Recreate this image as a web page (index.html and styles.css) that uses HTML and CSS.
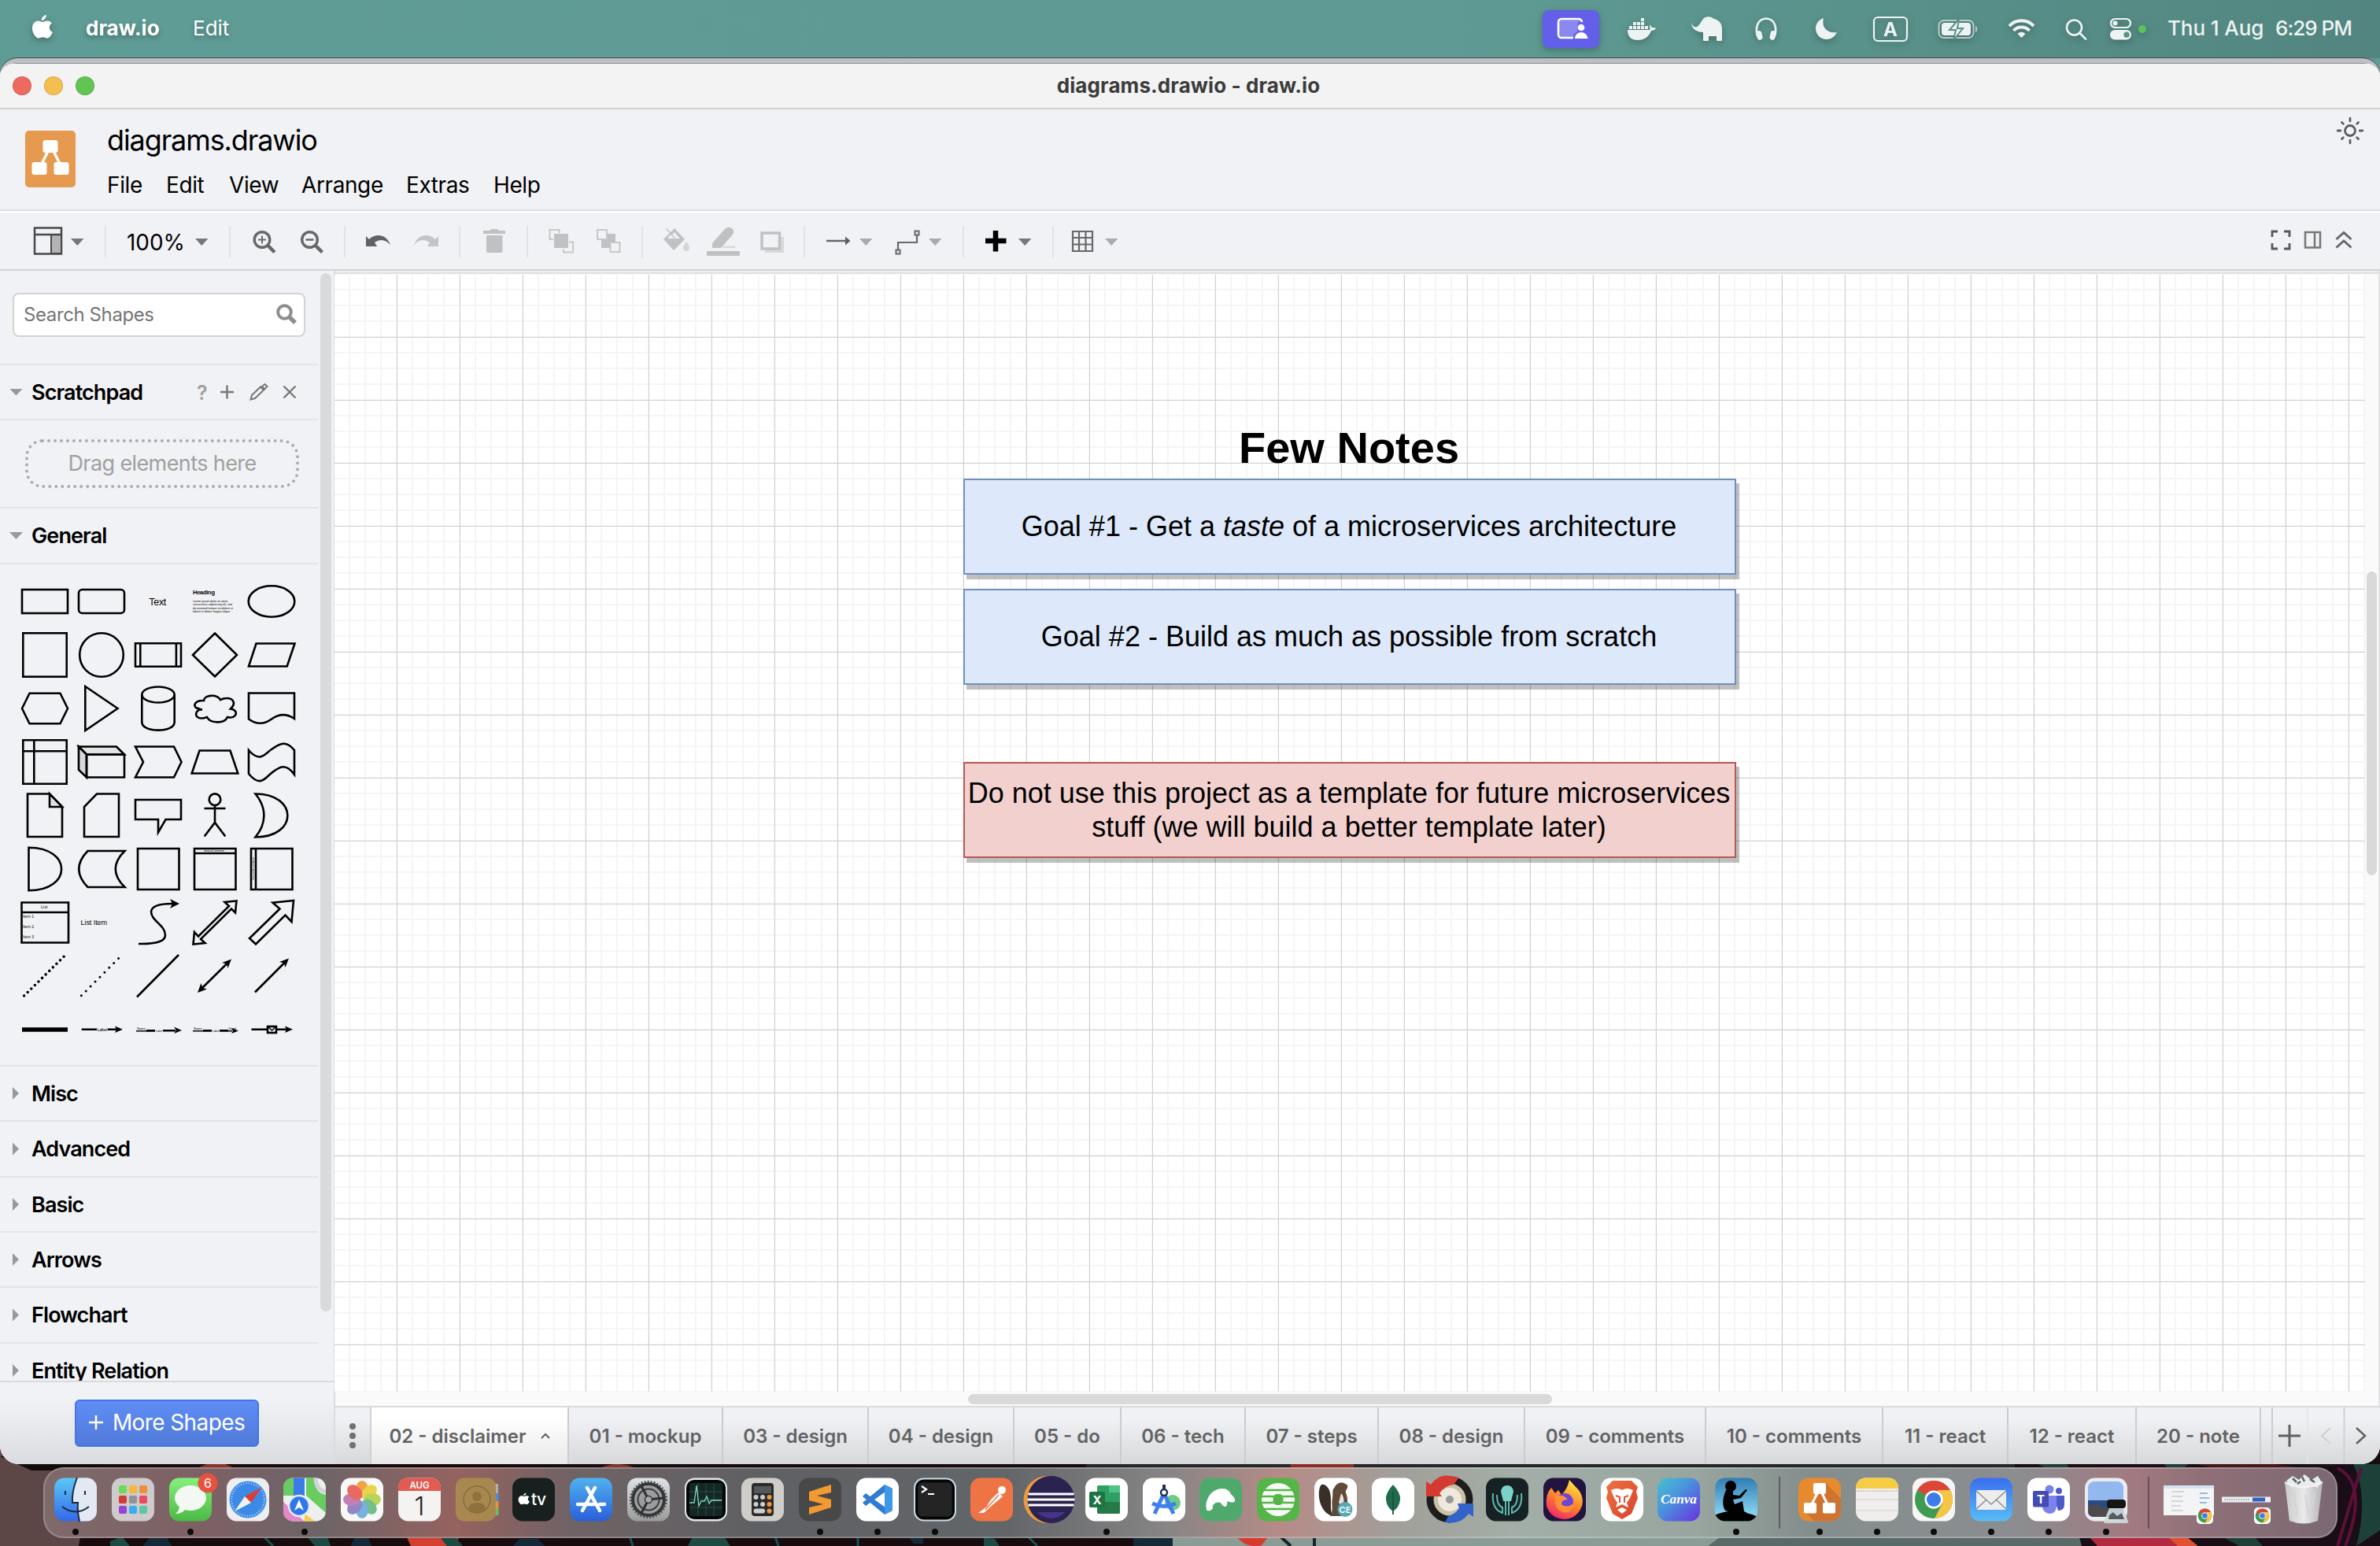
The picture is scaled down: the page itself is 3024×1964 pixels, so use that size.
FILE: index.html
```html
<!DOCTYPE html>
<html lang="en">
<head>
<meta charset="utf-8">
<title>diagrams.drawio - draw.io</title>
<link rel="stylesheet" href="styles.css">
</head>
<body>
<svg width="0" height="0" class="defs">
  <defs>
    <linearGradient id="gBlue" x1="0" y1="0" x2="0" y2="1"><stop offset="0" stop-color="#5ac8f5"/><stop offset="1" stop-color="#3568e8"/></linearGradient>
    <linearGradient id="gStore" x1="0" y1="0" x2="0" y2="1"><stop offset="0" stop-color="#4fb2ee"/><stop offset="1" stop-color="#2a5fd8"/></linearGradient>
    <linearGradient id="gMail" x1="0" y1="0" x2="0" y2="1"><stop offset="0" stop-color="#3a6df0"/><stop offset="1" stop-color="#58bdf5"/></linearGradient>
    <linearGradient id="gGreen" x1="0" y1="0" x2="0" y2="1"><stop offset="0" stop-color="#86f07c"/><stop offset="1" stop-color="#4cb944"/></linearGradient>
    <linearGradient id="gCanva" x1="0" y1="0" x2="1" y2="1"><stop offset="0" stop-color="#47c3cf"/><stop offset=".45" stop-color="#4a90dc"/><stop offset="1" stop-color="#6b30e0"/></linearGradient>
    <linearGradient id="gGrey" x1="0" y1="0" x2="0" y2="1"><stop offset="0" stop-color="#dfe3e6"/><stop offset="1" stop-color="#9a9a9a"/></linearGradient>
    <linearGradient id="gFox" x1=".8" y1="0" x2=".3" y2="1"><stop offset="0" stop-color="#fff04a"/><stop offset=".5" stop-color="#ff8a2a"/><stop offset="1" stop-color="#f0286a"/></linearGradient>
    <linearGradient id="gKindle" x1="0" y1="0" x2="0" y2="1"><stop offset="0" stop-color="#2f7db4"/><stop offset="1" stop-color="#9be4fb"/></linearGradient>
    <linearGradient id="gBrave" x1="0" y1="0" x2="1" y2="1"><stop offset="0" stop-color="#ee7340"/><stop offset="1" stop-color="#d8402c"/></linearGradient>
    <linearGradient id="gBin" x1="0" y1="0" x2="1" y2="0"><stop offset="0" stop-color="#c9cacb"/><stop offset=".5" stop-color="#e9e9ea"/><stop offset="1" stop-color="#b4b4b6"/></linearGradient>
    <clipPath id="tileClip"><rect x="-27" y="-27.500" width="54" height="55" rx="12.500"/></clipPath>
    <rect id="tile" x="-27" y="-27.500" width="54" height="55" rx="12.500"/>
    <circle id="run" cx="0" cy="41" r="4" fill="#0c0c0c"/>
    <path id="caret" d="M0 0H16.500L8.250 9Z"/>
    <g id="chrome">
      <circle r="24" fill="#3f9b52"/>
      <path d="M0 0L-20.800-12A24 24 0 0 1 20.800-12Z" fill="#dc4637"/>
      <path d="M0 0L-22-9.500L-10.500 8L0 12Z" fill="#3f9b52"/>
      <path d="M5-12H20.800A24 24 0 0 1 1 24L11 5Z" fill="#f6c544"/>
      <circle r="11.500" fill="#fff"/><circle r="9" fill="#3d7be8"/>
    </g>
  </defs>
</svg>

<div class="desktop">
  <header class="menubar">
    <svg class="apple" width="28" height="34" viewBox="0 0 28 34"><path fill="#fff" d="M18.800 1c.2 3.500-2.600 7-6 7.100C12.400 4.900 15.500 1.500 18.800 1zM14 10c1.500 0 3.400-1.700 6.300-1.500 2.200.1 4.200 1.100 5.500 3-4.500 2.900-3.900 9.200 1 11.200-1.100 3-3.700 7.800-6.800 7.800-2.200 0-3-1.300-5.600-1.300s-3.500 1.300-5.500 1.300C5.400 30.500 1 23.800 1 18c0-6 3.700-9.400 7.300-9.400C11 8.600 12.800 10 14 10z"/></svg>
    <span class="app-name">draw.io</span>
    <span class="app-menu">Edit</span>
    <div class="status">
      <svg width="100" height="74" viewBox="1950 0 100 74"><rect x="1960" y="13" width="72" height="48" rx="8" fill="#625fe8"/><rect x="1980" y="24" width="30" height="24" rx="4" fill="#8b88f0" stroke="#fff" stroke-width="2.600"/><path d="M1999 50v-6l5-4 1-12h10v22z" fill="#625fe8"/><circle cx="2009" cy="35" r="4.300" fill="#fff"/><path d="M2001 49c0-5 4-8 8-8s8 3 8.500 8z" fill="#fff"/></svg>
      <svg width="76" height="74" viewBox="2050 0 76 74" fill="#edf3f2"><path d="M2068 38h28c1-1 0-4 0-7l3 4c2 0 4 0 5 1-1 2-4 3-6 3-3 8-9 12-17 12-8 0-13-4-13-13z"/><path d="M2070 33h4v4h-4zM2075 33h4v4h-4zM2080 33h4v4h-4zM2085 33h4v4h-4zM2090 33h4v4h-4zM2075 28h4v4h-4zM2080 28h4v4h-4zM2085 28h4v4h-4zM2085 23h4v4h-4z"/></svg>
      <svg width="83" height="74" viewBox="2126 0 83 74" fill="#edf3f2"><path d="M2149 29c1 4 4 6 7 5 4-2 5-7 9-11 4-3 10-2 13 1 7 2 10 6 10 13v13c0 2-1 2-2 2h-3c-2 0-2 0-2-2v-4h-10v4c0 2 0 2-2 2h-3c-2 0-2 0-2-2v-9c-8 0-14-4-15-11z"/></svg>
      <svg width="71" height="74" viewBox="2209 0 71 74"><path d="M2233 46c-3-11 0-22 11-22.500 11 .5 14 11.500 11 22.500" fill="none" stroke="#edf3f2" stroke-width="2.600"/><rect x="2232" y="39" width="7" height="12" rx="3.500" fill="#edf3f2" transform="rotate(-12 2235 45)"/><rect x="2249" y="39" width="7" height="12" rx="3.500" fill="#edf3f2" transform="rotate(12 2253 45)"/></svg>
      <svg width="70" height="74" viewBox="2280 0 70 74"><path d="M2317 23c-3 11 4 20 17 18-3 6-8 9-13 9-8 0-14-6-14-14 0-6 4-11 10-13z" fill="#edf3f2"/></svg>
      <svg width="90" height="74" viewBox="2350 0 90 74"><rect x="2381" y="22" width="42" height="30" rx="5" fill="none" stroke="#edf3f2" stroke-width="2.200"/><text x="2402" y="45.500" text-anchor="middle" class="lang">A</text></svg>
      <svg width="90" height="74" viewBox="2440 0 90 74"><rect x="2463.500" y="26" width="44" height="22" rx="6.500" fill="none" stroke="#b4cdca" stroke-width="2"/><rect x="2467" y="29" width="37" height="16" rx="4" fill="#edf3f2"/><path d="M2510 33v8c3-1 3-7 0-8z" fill="#b4cdca"/><path d="M2489 24l-12 14h8l-3 13 12-15h-7z" fill="#edf3f2" stroke="#588f89" stroke-width="2"/></svg>
      <svg width="75" height="74" viewBox="2530 0 75 74" fill="none" stroke="#edf3f2" stroke-width="4"><path d="M2553 33c8-9 23-9 31 0M2558.500 39c5-6 15-6 20 0"/><path d="M2568.500 48l-5-5c3-3 7-3 10 0z" fill="#edf3f2" stroke="none"/></svg>
      <svg width="61" height="74" viewBox="2605 0 61 74" fill="none" stroke="#edf3f2" stroke-width="2.600" stroke-linecap="round"><circle cx="2635.500" cy="35" r="9.500"/><path d="M2642.500 42l7.500 7.500"/></svg>
      <svg width="74" height="74" viewBox="2666 0 74 74"><rect x="2682" y="24" width="25" height="11" rx="5.500" fill="none" stroke="#edf3f2" stroke-width="2.200"/><circle cx="2687.500" cy="29.500" r="3" fill="#edf3f2"/><rect x="2681" y="38" width="27" height="12.500" rx="6.200" fill="#edf3f2"/><circle cx="2702" cy="44.200" r="3.600" fill="#56908a"/><circle cx="2722" cy="37" r="5" fill="#5fc15d"/></svg>
    </div>
    <span class="date">Thu 1 Aug</span>
    <span class="clock">6:29 PM</span>
  </header>

  <main class="window">
    <div class="titlebar">
      <div class="lights"><i class="red"></i><i class="yellow"></i><i class="green"></i></div>
      <div class="title">diagrams.drawio - draw.io</div>
    </div>

    <div class="header">
      <svg class="logo" width="64" height="72" viewBox="0 0 64 72"><rect width="64" height="72" rx="5" fill="#e59a50"/><path d="M30 24L20 44M35 24L45 44" stroke="#fff" stroke-width="3.500"/><g fill="#fff"><rect x="22.500" y="12" width="19" height="16" rx="3"/><rect x="8.500" y="40" width="19" height="16" rx="3"/><rect x="36.500" y="40" width="19" height="16" rx="3"/></g></svg>
      <div class="doc">
        <div class="doc-name">diagrams.drawio</div>
        <nav class="menus"><span class="m-file">File</span><span class="m-edit">Edit</span><span class="m-view">View</span><span class="m-arr">Arrange</span><span class="m-ext">Extras</span><span>Help</span></nav>
      </div>
      <svg class="sun" width="36" height="36" viewBox="-18 -18 36 36" fill="none" stroke="#5a5c5e" stroke-width="2.800" stroke-linecap="round"><circle r="6.500"/><path d="M0-15.800v3.600M0 12.200v3.600M-15.800 0h3.600M12.200 0h3.600M-10.500-10.500l1.800 1.800M10.500 10.500l-1.800-1.800M-10.500 10.500l1.800-1.800M10.500-10.500l-1.800 1.800"/></svg>
    </div>

    <div class="toolbar">
      <svg width="133" height="72" viewBox="0 270 133 72"><rect x="44" y="288.500" width="34" height="33" fill="none" stroke="#47494b" stroke-width="2.500"/><rect x="65" y="297" width="13" height="24" fill="#b4b2b3" stroke="#47494b" stroke-width="2"/><path d="M44 297H78" stroke="#47494b" stroke-width="2.500"/><use href="#caret" x="90" y="302" fill="#777"/></svg>
      <svg class="group" width="158" height="72" viewBox="133 270 158 72"><text x="161" y="316.500" textLength="74" lengthAdjust="spacingAndGlyphs" class="zoom">100%</text><use href="#caret" x="248" y="302" fill="#777"/></svg>
      <svg class="group" width="146" height="72" viewBox="291 270 146 72" fill="none" stroke="#66686a"><circle cx="333" cy="303.500" r="9.800" stroke-width="3.400"/><path d="M328 303.500h10M333 298.500v10" stroke-width="2"/><path d="M340 310.500l9 9" stroke-width="4.500"/><circle cx="393.500" cy="303.500" r="9.800" stroke-width="3.400"/><path d="M388.500 303.500h10" stroke-width="2.500"/><path d="M400.500 310.500l9 9" stroke-width="4.500"/></svg>
      <svg class="group" width="146" height="72" viewBox="437 270 146 72"><path d="M465 299l4 4c8-8 22-7 27 7-6-7-13-8-20-3l3 5h-14z" fill="#606264"/><path d="M557 299l-4 4c-8-8-22-7-27 7 6-7 13-8 20-3l-3 5h14z" fill="#c3c5c7"/></svg>
      <svg class="group" width="86" height="72" viewBox="583 270 86 72" fill="#c0c1c3"><path d="M614 292h8l2-2h8l2 2h8v4h-28zM618 298h20.500v20c0 1-1 2-2 2h-16.500c-1 0-2-1-2-2z"/></svg>
      <svg class="group" width="146" height="72" viewBox="669 270 146 72" stroke="#c5c7c9" stroke-width="2"><rect x="704" y="296" width="18" height="18" fill="#bfc1c3" stroke="none"/><path d="M703 303h-4.500v-12h12v4M716 315.500v4h12v-13h-5" fill="none"/><path d="M764 296h18v18h-18z" fill="#bfc1c3" stroke="none"/><rect x="759" y="291" width="12" height="12" fill="#f1f2f5"/><rect x="775.500" y="307" width="12" height="12" fill="#f1f2f5"/></svg>
      <svg class="group" width="206" height="72" viewBox="815 270 206 72" fill="#c0c1c3"><path d="M847 289l5 5 5-5 13 14-14 14-13-14 8-8-5-5zM852 297l-4 5h16l-7-8-3 3 4 4-1 1z" fill-rule="evenodd"/><path d="M872 306c3 4 4 6 4 8a4 4 0 0 1-8 0c0-2 1-4 4-8z" fill="#d4d5d7"/><path d="M905 314v-6l15-17c3-4 8-4 11-1 2 3 1 5 0 7l-15 17z"/><path d="M918 311.500h16v2.500h-16z" fill="#d8d9db"/><rect x="898" y="318" width="42" height="6"/><rect x="972" y="300" width="24" height="20" fill="#d8d9db"/><rect x="968" y="295" width="22.500" height="20" fill="#f1f2f5" stroke="#c0c1c3" stroke-width="3.500"/></svg>
      <svg class="group" width="202" height="72" viewBox="1021 270 202 72"><path d="M1050 305h27" stroke="#66686a" stroke-width="2.500"/><path d="M1074 299.500l6.500 5.500-6.500 5.500z" fill="#5c5e60"/><use href="#caret" x="1092" y="302" fill="#aaa"/><path d="M1141 317v-10h24v-10" fill="none" stroke="#66686a" stroke-width="2.200"/><rect x="1138.500" y="316.500" width="5" height="5" fill="#f1f2f5" stroke="#66686a" stroke-width="2"/><rect x="1162.500" y="292.500" width="5" height="5" fill="#f1f2f5" stroke="#66686a" stroke-width="2"/><use href="#caret" x="1180" y="302" fill="#aaa"/></svg>
      <svg class="group" width="114" height="72" viewBox="1223 270 114 72"><path d="M1252 305h26.500M1265 292v26.500" stroke="#000" stroke-width="6.500"/><use href="#caret" x="1294" y="302" fill="#777"/></svg>
      <svg class="group" width="114" height="72" viewBox="1337 270 114 72"><path d="M1363 293h25v25h-25zM1371 293v25M1379.500 293v25M1363 301h25M1363 309.500h25" fill="none" stroke="#66686a" stroke-width="2.200"/><use href="#caret" x="1404" y="302" fill="#aaa"/></svg>
      <svg class="tools-right" width="164" height="72" viewBox="2860 270 164 72" fill="none" stroke="#66686a" stroke-width="2.500"><path d="M2887 300v-7h7M2902 293h7v7M2909 308v7h-7M2894 315h-7v-7" stroke="#55575a" stroke-width="2.800"/><rect x="2929" y="294" width="19" height="19.500" stroke="#777"/><path d="M2941 294v19.500" stroke="#777"/><path d="M2968.500 303l9.500-8.500 9.500 8.500M2968.500 313.500l9.500-8.500 9.500 8.500" stroke-width="3"/></svg>
    </div>

    <div class="body">
      <aside class="sidebar">
        <div class="scroll">
          <div class="sections">
            <div class="search-row"><div class="search"><span>Search Shapes</span><svg width="26" height="26" viewBox="0 0 26 26" fill="none" stroke="#8d8d8d"><circle cx="10.500" cy="10.500" r="8.300" stroke-width="4"/><path d="M16.500 16.500l7.500 7.500" stroke-width="5.500"/></svg></div></div>
            <div class="section"><i class="open"></i><span>Scratchpad</span>
              <svg class="pad-tools" width="130" height="26" viewBox="249 485 130 26" fill="none" stroke="#777" stroke-width="2.400"><text x="250" y="507.500" class="help">?</text><path d="M280 498h17M288.500 489.500v17M360.500 490.500l15 15M375.500 490.500l-15 15"/><path d="M318.500 507.500l1.500-5.500 11-10.500 4 4-11 10.500zM333 491l3.500-3 3 3-3.500 3.500z" stroke-width="2"/></svg>
            </div>
            <div class="drop-row"><div class="drop">Drag elements here</div></div>
            <div class="section tall"><i class="open"></i><span>General</span></div>
            <div class="palette">
              <svg viewBox="-36 -34 72 68"><rect x="-29" y="-15" width="58" height="30"/></svg>
              <svg viewBox="-36 -34 72 68"><rect x="-29" y="-15" width="58" height="30" rx="4.500"/></svg>
              <svg viewBox="-36 -34 72 68"><text x="-11.700" y="4.500" font-size="12.500" textLength="22">Text</text></svg>
              <svg viewBox="-36 -34 72 68"><text x="-28" y="-9" font-size="7.500" font-weight="bold" textLength="28">Heading</text><g font-size="3.600"><text x="-28" y="1" textLength="45">Lorem ipsum dolor sit amet,</text><text x="-28" y="5.300" textLength="50">consectetur adipisicing elit, sed</text><text x="-28" y="9.800" textLength="51">do eiusmod tempor incididunt ut</text><text x="-28" y="14" textLength="48">labore et dolore magna aliqua.</text></g></svg>
              <svg viewBox="-36 -34 72 68"><ellipse rx="29.300" ry="19.700"/></svg>

              <svg viewBox="-36 -34 72 68"><rect x="-27.700" y="-27.700" width="55.400" height="55.400"/></svg>
              <svg viewBox="-36 -34 72 68"><circle r="27.800"/></svg>
              <svg viewBox="-36 -34 72 68"><path d="M-29-14.700H29V14.700H-29zM-22.700-14.700V14.700M22.900-14.700V14.700"/></svg>
              <svg viewBox="-36 -34 72 68"><path d="M0-27.500L28 0 0 27.500-28 0z"/></svg>
              <svg viewBox="-36 -34 72 68"><path d="M-19.500-14.500H29.500L19.700 14.500H-29z"/></svg>

              <svg viewBox="-36 -34 72 68"><path d="M-29 0L-19.500-19.300H19.500L29 0 19.500 19.300H-19.500z"/></svg>
              <svg viewBox="-36 -34 72 68"><path d="M-20.700-28L20.500 0-20.700 28z"/></svg>
              <svg viewBox="-36 -34 72 68"><ellipse cy="-17.500" rx="20.700" ry="10"/><path d="M-20.700-17.500V17.500C-20.700 31 20.700 31 20.700 17.500V-17.500"/></svg>
              <svg viewBox="-36 -34 72 68"><path d="M-14-10C-24-10.500-28-5-24-1-20 1-20 1-16 1.500-25 1-25 9-22 11-18 14-13 12-10 11-6 19 12 20 16 11 28 14 31 2 20 .5 27-6 24-13 15-13 12-13 9-12 7-11 2-19-14-17-14-10z"/></svg>
              <svg viewBox="-36 -34 72 68"><path d="M-29-19.500H29V13Q14.500 3 0 13.500T-29 13.500z"/></svg>

              <svg viewBox="-36 -34 72 68"><path d="M-27.700-27.700H27.700V27.700H-27.700zM-13.700-27.700V27.700M-27.700-13.700H27.700"/></svg>
              <svg viewBox="-36 -34 72 68"><path fill="#e2e3e5" d="M-29-19.500H19L29-9.500H-19z"/><path fill="#d8d9dc" d="M-29-19.500L-19-9.500V19.500L-29 10z"/><path d="M-19-9.500H29V19.500H-19z"/></svg>
              <svg viewBox="-36 -34 72 68"><path d="M-29-19.500H20L29.500 0 20 19.500H-29L-19 0z"/></svg>
              <svg viewBox="-36 -34 72 68"><path d="M-19.500-14.500H19.500L29.300 14.500H-29.300z"/></svg>
              <svg viewBox="-36 -34 72 68"><path d="M-29-15C-14.500 2-8-11 0-16S17-30 29-15V16C17-1 8 8 0 14S-14 33-29 15z"/></svg>

              <svg viewBox="-36 -34 72 68"><path d="M-22-27.500H6L22-11V27H-22z"/><path fill="#e2e3e5" d="M6-27.500V-11H22z"/></svg>
              <svg viewBox="-36 -34 72 68"><path d="M-6-27.500H22V27H-22V-11z"/></svg>
              <svg viewBox="-36 -34 72 68"><path d="M-29-20H29V5H9.500L0 21.500V5H-29z"/></svg>
              <svg viewBox="-36 -34 72 68"><circle cy="-20.300" r="7.300"/><path d="M0-13V9M-13.500-9H13.500M-13.300 26.500L0 9 13.300 26.500"/></svg>
              <svg viewBox="-36 -34 72 68"><path d="M-20.500-27.500C34-27.500 34 27.500-20.500 27.500C-6 10-6-10-20.500-27.500z"/></svg>

              <svg viewBox="-36 -34 72 68"><path d="M-20.500-27.300C35-27.300 35 27.300-20.500 27.300z"/></svg>
              <svg viewBox="-36 -34 72 68"><path d="M-17.500-23H29.500Q6 0 29.500 23H-17.500Q-40 0-17.500-23z"/></svg>
              <svg viewBox="-36 -34 72 68"><path d="M-26-26H26.500V26H-26z"/></svg>
              <svg viewBox="-36 -34 72 68"><path d="M-26-26H26.500V26H-26zM-26-20H26.500"/><text x="-14" y="-22" font-size="3.500" textLength="26">Vertical Container</text></svg>
              <svg viewBox="-36 -34 72 68"><path d="M-26-26H26.500V26H-26zM-20-26V26"/><text transform="rotate(-90)" x="-14" y="-22" font-size="3.500" textLength="29">Horizontal Container</text></svg>

              <svg viewBox="-36 -34 72 68"><path d="M-29.500-25.500H30V25.500H-29.500zM-29.500-13H30"/><g font-size="5"><text x="-5" y="-18" textLength="8.500">List</text><text x="-28" y="-6.200" textLength="14">Item 1</text><text x="-28" y="6.800" textLength="14">Item 2</text><text x="-28" y="19.800" textLength="14">Item 3</text></g></svg>
              <svg viewBox="-36 -34 72 68"><text x="-26.500" y="3" font-size="9" textLength="33.500">List Item</text></svg>
              <svg viewBox="-36 -34 72 68"><path d="M-25 27C0 27.500 9 23 9 16C9 3-9-2-9-14C-8-22 3-24 18-24"/><path class="solid" d="M27-24L15-30 18-24 15-18z"/></svg>
              <svg viewBox="-36 -34 72 68"><path d="M27.500-27.500L12.500-26 18-21-21 17.500-26 12-27.500 27.500-12.500 26-18 21 21-17.500 26-12.500z"/></svg>
              <svg viewBox="-36 -34 72 68"><path d="M28-28L1.500-25.300 10.500-17.500-28 20-20 27.500 17.500-9.500 25.500-1z"/></svg>

              <svg viewBox="-36 -34 72 68"><path class="round" stroke-width="3.600" stroke-dasharray="0 6.440" d="M-26.400 25L24.200-24.800"/></svg>
              <svg viewBox="-36 -34 72 68"><path class="round" stroke-width="3" stroke-dasharray="0 8.360" d="M-25.700 24.800L21.800-22.700"/></svg>
              <svg viewBox="-36 -34 72 68"><path d="M-27 26.500L26-27"/></svg>
              <svg viewBox="-36 -34 72 68"><path d="M-17 16L16-16.500"/><path class="solid" d="M21-21.500L9-17 15-15.500 16.500-10zM-22 21L-17.500 9-15.500 15-10 16.500z"/></svg>
              <svg viewBox="-36 -34 72 68"><path d="M-21 20.500L16-16.500"/><path class="solid" d="M22-22.500L10-18 16-16.500 17.500-11z"/></svg>

              <svg viewBox="-36 -34 72 68"><path stroke-width="5.500" d="M-29 0H29"/></svg>
              <svg viewBox="-36 -34 72 68"><path d="M-25.300-.3H-6M8-.3H20"/><path class="solid" d="M27-.3L17-4.500 19-.3 17 4z"/><text x="-5.500" y="2" font-size="6" textLength="13">Label</text></svg>
              <svg viewBox="-36 -34 72 68"><path d="M-28 1.800H-4" stroke-width="1.500"/><path d="M-15 1.200H-4M6 1.200H22"/><path class="solid" d="M30 1L20-3.500 23 1 20 5z"/><text x="-27" y="-.5" font-size="4" textLength="11">Source</text><text x="-3" y="2.500" font-size="3.500" textLength="8">Label</text></svg>
              <svg viewBox="-36 -34 72 68"><path d="M-28 1.800H-4M6 1.800H22" stroke-width="1.500"/><path d="M-15 1.200H-4M6 1.200H17"/><path class="solid" d="M30 1.500L21-2 23 1.500 21 5z"/><text x="-27" y="-.5" font-size="4" textLength="11">Source</text><text x="-3" y="2.500" font-size="3.500" textLength="8">Label</text><text x="17" y="-.5" font-size="4" textLength="10">Target</text></svg>
              <svg viewBox="-36 -34 72 68"><path d="M-25.500-.3H20"/><path class="solid" d="M27-.3L17-4.500 19-.3 17 4z"/><rect x="-5" y="-4" width="11" height="8" fill="#f1f2f5"/><path d="M-5-4L.5 1 6-4" stroke-width="1.500"/></svg>
            </div>
            <div class="section"><i></i><span>Misc</span></div>
            <div class="section tall"><i></i><span>Advanced</span></div>
            <div class="section"><i></i><span>Basic</span></div>
            <div class="section"><i></i><span>Arrows</span></div>
            <div class="section tall"><i></i><span>Flowchart</span></div>
            <div class="section"><i></i><span>Entity Relation</span></div>
          </div>
          <div class="side-thumb"></div>
        </div>
        <div class="more"><div class="more-btn"><svg width="18" height="18" viewBox="0 0 18 18"><path d="M0 9h18M9 0v18" stroke="#fff" stroke-width="2.600"/></svg><span>More Shapes</span></div></div>
      </aside>

      <section class="editor">
        <div class="stage">
          <div class="grid"></div>
          <h1 class="note-title">Few Notes</h1>
          <div class="note goal1"><span>Goal #1 - Get a <em>taste</em> of a microservices architecture</span></div>
          <div class="note goal2"><span>Goal #2 - Build as much as possible from scratch</span></div>
          <div class="note warn"><span>Do not use this project as a template for future microservices<br>stuff (we will build a better template later)</span></div>
          <div class="v-thumb"></div>
          <div class="h-thumb"></div>
        </div>
        <div class="tabs">
          <div class="dots"><i></i><i></i><i></i></div>
          <div class="tab active w251"><span>02 - disclaimer</span><svg width="12" height="8" viewBox="0 0 12 8"><path d="M1 7l5-5 5 5" fill="none" stroke="#5f6062" stroke-width="2"/></svg></div>
          <div class="tab w196">01 - mockup</div>
          <div class="tab w185">03 - design</div>
          <div class="tab w185">04 - design</div>
          <div class="tab w136">05 - do</div>
          <div class="tab w158">06 - tech</div>
          <div class="tab w169">07 - steps</div>
          <div class="tab w186">08 - design</div>
          <div class="tab w230">09 - comments</div>
          <div class="tab w225">10 - comments</div>
          <div class="tab w159">11 - react</div>
          <div class="tab w163">12 - react</div>
          <div class="tab w158">20 - note</div>
          <div class="tab w15"></div>
          <svg class="tab-tools" width="136" height="72" viewBox="2888 1788 136 72" fill="none" stroke="#5f6062"><path d="M2895 1824h28M2909 1810v28" stroke-width="3"/><path d="M2932 1788v72" stroke="#e2e3e6" stroke-width="1.500"/><path d="M2961 1814l-11 10 11 10" stroke="#cfd1d3" stroke-width="2"/><path d="M2978.500 1788v72" stroke="#cfd0d4" stroke-width="2"/><path d="M2994 1814l11 10-11 10" stroke-width="2.400"/></svg>
        </div>
      </section>
    </div>
  </main>

  <div class="shore">
    <svg class="wallpaper" width="3024" height="140" viewBox="0 1824 3024 140" preserveAspectRatio="none">
      <rect y="1824" width="3024" height="140" fill="#170b0e"/>
      <path d="M0 1824H125L100 1964H0z" fill="#5c4646"/>
      <path d="M0 1850H125V1868H40z" fill="#120b0c"/>
      <path d="M250 1866q25-16 48 0z M760 1866q25-12 50 0z" fill="#8c3526"/>
      <path d="M517 1953h66l-6 11h-55z" fill="#d4402f"/>
      <path d="M140 1958l15-6 10 12h-25zM390 1952l26-1 4 13h-20zM560 1954h20l8 10h-20zM880 1952h40l8 12h-54zM1250 1953l14 2 6 9h-20z" fill="#1d4a43"/>
      <path d="M190 1953h22l6 11h-36zM450 1954h18l4 10h-26zM660 1955h24l8 9h-40zM1155 1953h18v8h-12zM1440 1953h50v11h-50z" fill="#152a38"/>
      <path d="M335 1952l12 12M800 1952l4 12M985 1952l4 12M1090 1952v12M1306 1952l12 12" stroke="#1a5252" stroke-width="3"/>
      <path d="M1490 1824H2560V1964H1490z" fill="#8b9c96"/>
      <path d="M1380 1859H2560v8H1380z" fill="#24272a"/>
      <path d="M1640 1860h80v7h-80z" fill="#8c2e26"/>
      <path d="M1571 1953h40l-8 10q-10 3-22-2z" fill="#d93a2f"/>
      <path d="M1628 1953l12 11M1670 1953v11" stroke="#17252c" stroke-width="4"/>
      <path d="M2185 1953h470l8 11H2170z" fill="#5a6a69"/>
      <path d="M2560 1859H3024V1964H2645l-3-11h40z" fill="#190d16"/>
      <path d="M2655 1953h122l14 11H2665z" fill="#b12a40"/><path d="M2755 1953h24l14 11h-26z" fill="#e2512f"/>
      <path d="M2825 1953l20 11h30l-10-11zM2990 1860q20 40 4 104l30-20v-84z" fill="#1d4038"/>
      <path d="M2590 1860l10 6h30l-4-6zM2750 1860h30l-6 6h-20z" fill="#1d4038"/>
      <path d="M2790 1860h100l60 8-20 18h-20z" fill="#471817"/>
      <path d="M2970 1865q40 20 10 99M3000 1865l-30 99" stroke="#5c1038" stroke-width="4" fill="none"/>
    </svg>
    <div class="dock">
      <svg class="slot" viewBox="-36 -41 72.760 90"><use href="#tile" fill="url(#gBlue)"/><path clip-path="url(#tileClip)" d="M2-28Q-5-10-4 4H3Q2 14 5 28H28V-28z" fill="#e3e9f2"/><path d="M-13-11v5M12-11v5M-17 9Q0 22 17 9M2-28Q-5-10-4 4H3Q2 14 5 28" fill="none" stroke="#1c2a40" stroke-width="2"/><use href="#run"/></svg>
      <svg class="slot" viewBox="-36 -41 72.760 90"><use href="#tile" fill="#cfcacc"/><g><rect x="-18" y="-18" width="10" height="10" rx="2" fill="#68dd55"/><rect x="-5" y="-18" width="10" height="10" rx="2" fill="#f3b93c"/><rect x="8" y="-18" width="10" height="10" rx="2" fill="#ec9137"/><rect x="-18" y="-5" width="10" height="10" rx="2" fill="#d23a35"/><rect x="-5" y="-5" width="10" height="10" rx="2" fill="#8e9599"/><rect x="8" y="-5" width="10" height="10" rx="2" fill="#ee4a5c"/><rect x="-18" y="8" width="10" height="10" rx="2" fill="#9744d6"/><rect x="-5" y="8" width="10" height="10" rx="2" fill="#3cabf0"/><rect x="8" y="8" width="10" height="10" rx="2" fill="#5cc5a1"/></g></svg>
      <svg class="slot" viewBox="-36 -41 72.760 90"><use href="#tile" fill="url(#gGreen)"/><ellipse rx="20" ry="16" cy="-2" fill="#f3f8f3"/><path d="M-14 8q0 6-5 10 8 0 12-5z" fill="#f3f8f3"/><circle cx="22" cy="-21" r="12.500" fill="#e5523e"/><text x="22" y="-15.500" class="badge">6</text><use href="#run"/></svg>
      <svg class="slot" viewBox="-36 -41 72.760 90"><use href="#tile" fill="#eceef0"/><circle r="23.500" fill="#3b8ae8"/><circle r="21" fill="none" stroke="#b9d8f7" stroke-width="2.500" stroke-dasharray="1 2.300"/><path d="M17-15L4 4-4-4z" fill="#e23b33"/><path d="M-17 15L-4-4 4 4z" fill="#f0f2f4"/></svg>
      <svg class="slot" viewBox="-36 -41 72.760 90"><g clip-path="url(#tileClip)"><rect x="-28" y="-28" width="56" height="56" fill="#edf0ee"/><path d="M-28-28H-14V-5H-28zM2-28H12Q12-8 28-6V18L2-5z" fill="#69cc61"/><path d="M-28 2L0 28H-28z" fill="#e488c4"/><path d="M-14-28H0V0H-14z" fill="#3b7be8"/><path d="M0 28V18L14 28z" fill="#f4cf48"/><path d="M28-10Q14-12 14-28" fill="none" stroke="#cfd3d6" stroke-width="5"/></g><circle cx="-7" cy="8" r="13" fill="#2f78ea" stroke="#e8ecf2" stroke-width="2.500"/><path d="M-7 0L-1 14-7 10-13 14z" fill="#fff"/><use href="#run"/></svg>
      <svg class="slot" viewBox="-36 -41 72.760 90"><use href="#tile" fill="#f8f8f8"/><g opacity=".88"><ellipse cy="-13" rx="8" ry="11" fill="#f2962e"/><ellipse cy="-13" rx="8" ry="11" fill="#e9cf34" transform="rotate(45)"/><ellipse cy="-13" rx="8" ry="11" fill="#b4cf45" transform="rotate(90)"/><ellipse cy="-13" rx="8" ry="11" fill="#62b77a" transform="rotate(135)"/><ellipse cy="-13" rx="8" ry="11" fill="#66a8dc" transform="rotate(180)"/><ellipse cy="-13" rx="8" ry="11" fill="#8378c0" transform="rotate(225)"/><ellipse cy="-13" rx="8" ry="11" fill="#bb6fa8" transform="rotate(270)"/><ellipse cy="-13" rx="8" ry="11" fill="#e8554a" transform="rotate(315)"/></g></svg>
      <svg class="slot" viewBox="-36 -41 72.760 90"><use href="#tile" fill="#f4f3f1"/><path clip-path="url(#tileClip)" d="M-28-28H28V-11H-28z" fill="#e25a50"/><text y="-14.500" class="cal-m">AUG</text><text y="20" class="cal-d">1</text></svg>
      <svg class="slot" viewBox="-36 -41 72.760 90"><path d="M20-20h7v12h-7z" fill="#b0b0a8"/><path d="M20-8h7.500v10h-7.500z" fill="#4b8fd0"/><path d="M20 2h7.500v9h-7.500z" fill="#e8923c"/><path d="M20 11h7.500v9h-7.500z" fill="#67c05a"/><rect x="-27" y="-27.500" width="51" height="55" rx="11" fill="#a98850"/><circle cx="0" r="17" fill="none" stroke="#8a6c39" stroke-width="1.500"/><circle cy="-4" r="6" fill="#8f713c"/><path d="M-11 12q0-8 11-8t11 8q-5 5-11 5t-11-5z" fill="#8f713c"/></svg>
      <svg class="slot" viewBox="-36 -41 72.760 90"><use href="#tile" fill="#17201f"/><path transform="translate(-20 -9) scale(.56 .5)" fill="#fff" d="M18.800 1c.2 3.500-2.600 7-6 7.100C12.400 4.900 15.500 1.500 18.800 1zM14 10c1.500 0 3.400-1.700 6.300-1.500 2.200.1 4.200 1.100 5.500 3-4.500 2.900-3.900 9.200 1 11.200-1.100 3-3.700 7.800-6.800 7.800-2.200 0-3-1.300-5.600-1.300s-3.500 1.300-5.500 1.300C5.400 30.500 1 23.800 1 18c0-6 3.700-9.400 7.300-9.400C11 8.600 12.800 10 14 10z"/><text x="-3" y="6.500" class="tv">tv</text></svg>
      <svg class="slot" viewBox="-36 -41 72.760 90"><use href="#tile" fill="url(#gStore)"/><path d="M5-15L-11 14M-5-15L11 14M-17 6H4M11 6H17" stroke="#fff" stroke-width="4.500" stroke-linecap="round"/></svg>
      <svg class="slot" viewBox="-36 -41 72.760 90"><use href="#tile" fill="url(#gGrey)"/><circle r="20" fill="#9b9d9f" stroke="#333537" stroke-width="4"/><circle r="13.500" fill="none" stroke="#3a3c3e" stroke-width="2"/><circle r="22.500" fill="none" stroke="#4b4d4f" stroke-width="3" stroke-dasharray="2 2"/><path d="M0 0L19-2M0 0L-9-17M0 0L-9 17" stroke="#2d2f31" stroke-width="3"/><circle r="4.500" fill="#aaa" stroke="#333" stroke-width="1.500"/></svg>
      <svg class="slot" viewBox="-36 -41 72.760 90"><use href="#tile" fill="#dfe6ea"/><rect x="-25" y="-25" width="50" height="50" rx="10" fill="#050606"/><rect x="-21" y="-21" width="42" height="42" rx="3" fill="#142724"/><path d="M-21-10H21M-21 0H21M-21 10H21M-10-21V21M0-21V21M10-21V21" stroke="#2c4d47" stroke-width="1"/><path d="M-21 4h6l3-22 3 26 3-6h4l3-6 3 9 3-4h13" fill="none" stroke="#7fd8c4" stroke-width="1.300"/></svg>
      <svg class="slot" viewBox="-36 -41 72.760 90"><use href="#tile" fill="#cfcdca"/><rect x="-14" y="-21" width="28" height="42" rx="4" fill="#2a2b2c"/><rect x="-11" y="-17" width="22" height="9" rx="1" fill="#55585a"/><g fill="#cfcfcf"><circle cx="-8.500" cy="-3" r="3"/><circle cx="0" cy="-3" r="3"/><circle cx="-8.500" cy="6" r="3"/><circle cx="0" cy="6" r="3"/><rect x="-11.500" y="11.500" width="14.500" height="6" rx="3"/></g><g fill="#f09a3a"><circle cx="8.500" cy="-3" r="3"/><circle cx="8.500" cy="6" r="3"/><circle cx="8.500" cy="14.500" r="3"/></g></svg>
      <svg class="slot" viewBox="-36 -41 72.760 90"><use href="#tile" fill="#484848"/><path d="M14-19L-14-10V1L4 6-14 10V19L14 10V0L-4-5 14-9z" fill="#f29a31"/><use href="#run"/></svg>
      <svg class="slot" viewBox="-36 -41 72.760 90"><use href="#tile" fill="#fff"/><path d="M9-19L19-14V14L9 19-19-4-15-8 10 10V-10L-15 8-19 4z" fill="#2f7cd0"/><path d="M9-19L19-14V14L9 19z" fill="#3f97e8"/><use href="#run"/></svg>
      <svg class="slot" viewBox="-36 -41 72.760 90"><use href="#tile" fill="#c9dbe5"/><rect x="-25" y="-25.500" width="50" height="51" rx="11" fill="#070707"/><rect x="-21.500" y="-21.500" width="43" height="43" rx="5" fill="#242424"/><path d="M-17-17l6 4-6 4M-9-7h8" fill="none" stroke="#fff" stroke-width="2.200"/><use href="#run"/></svg>
      <svg class="slot" viewBox="-36 -41 72.760 90"><use href="#tile" fill="#ee7446"/><circle cx="13" cy="-12" r="5" fill="#fff"/><path d="M9-9Q-3 0-6 9L-17 17-10 17 1 7 14-4z" fill="#fff"/><path d="M9-6L-8 13" stroke="#ee7446" stroke-width="1.500"/></svg>
      <svg class="slot" viewBox="-38.500 -41 72.760 90"><circle cx="-5" r="30" fill="#ea9a3e"/><circle r="30" fill="#2a2350"/><path d="M-18 16Q0 32 18 16z" fill="#47348a"/><path d="M-29-7H29M-30 0H30M-29 7H29" stroke="#fff" stroke-width="3"/></svg>
      <svg class="slot" viewBox="-36 -41 72.760 90"><use href="#tile" fill="#fff"/><rect x="-12" y="-18" width="29" height="36" rx="2" fill="#2f9f62"/><path d="M3-18H17V-9H3z" fill="#50c487"/><path d="M-12 3H17V16q0 2-2 2h-25q-2 0-2-2z" fill="#257a48"/><rect x="-22" y="-10" width="20" height="20" rx="2" fill="#1d7344"/><text x="-12" y="5.500" class="xl">X</text><use href="#run"/></svg>
      <svg class="slot" viewBox="-36 -41 72.760 90"><use href="#tile" fill="#fff"/><circle cx="11" cy="4" r="10" fill="#6ecb86"/><path d="M0-8L-12 18M0-8L12 18M-15 5Q0 12 15 5" fill="none" stroke="#3f7ff0" stroke-width="5"/><path d="M0-19V-12" stroke="#203050" stroke-width="4"/><circle cy="-9" r="4" fill="#fff" stroke="#203050" stroke-width="2.500"/></svg>
      <svg class="slot" viewBox="-36 -41 72.760 90"><use href="#tile" fill="#4fa96c"/><path d="M-18 13C-21-3-9-14 2-14C8-14 11-11 13-7C16-4 19-1 18 2C16 5 11 3 8 2C9 5 8 8 6 9C3 9 1 6 0 4C-5 2-11 5-10 11C-12 15-17 15-18 13z" fill="#fff"/></svg>
      <svg class="slot" viewBox="-36 -41 72.760 90"><use href="#tile" fill="#56b548"/><circle r="21" fill="#f5faf5"/><rect x="-6.500" y="-7" width="13" height="14" rx="5" fill="#56b548"/><path d="M-22-12H22M-22-4H-6M6-4H22M-22 4H-6M6 4H22M-22 12H22" stroke="#56b548" stroke-width="2.600"/></svg>
      <svg class="slot" viewBox="-36 -41 72.760 90"><use href="#tile" fill="#fff"/><path d="M-19-18C-24-8-21 16-4 21C-8 10-4-2-8-12C-11-18-16-21-19-18z" fill="#3a2e28"/><path d="M-7 21C-2 14-6 6-4-2C-3-8-5-12-1-16C1-21 8-23 12-20C16-19 16-16 14-13C12-11 13-9 14-6C16 2 16 14 10 21z" fill="#5f4a3c"/><path d="M7-8Q13-2 9 10L4 4z" fill="#ece3d8"/><circle cx="12" cy="12.500" r="9.500" fill="#55a8b4"/><text x="12" y="17" class="ce">CE</text></svg>
      <svg class="slot" viewBox="-36 -41 72.760 90"><use href="#tile" fill="#fff"/><path d="M0-19Q10-8 9 0 8 10 0 15-8 10-9 0-10-8 0-19z" fill="#1f6b4a"/><path d="M0-10V19" stroke="#17523a" stroke-width="1.800"/></svg>
      <svg class="slot" viewBox="-36 -41 72.760 90"><circle r="25" fill="#c9c0a6" stroke="#1d1d1d" stroke-width="9"/><circle r="15" fill="#eee9dc"/><circle r="5" fill="#9a9a9a"/><path d="M-30-23L-24-19Q-14-33 0-30L12-28 5-19Q-6-18-13-8L-10-4H-30z" fill="#d43a30"/><path d="M30 22L24 18Q14 32-6 29L-2 21Q8 18 12 11L10 5H30z" fill="#3163c8"/></svg>
      <svg class="slot" viewBox="-36 -41 72.760 90"><use href="#tile" fill="#172123"/><path d="M-8-10Q-7-18 0-18T8-10L5 2H-5z" fill="#79d3cb"/><path d="M-18-8Q-20 12-6 17M18-8Q20 12 6 17M-13-6Q-13 8-6 10V18M13-6Q13 8 6 10V18M-2 2V20M2 2V20" fill="none" stroke="#5cb8b0" stroke-width="2"/></svg>
      <svg class="slot" viewBox="-36 -41 72.760 90"><use href="#tile" fill="#23143f"/><path d="M6-25Q12-18 18-12Q25-2 22 8 16 24 0 25-18 24-23 8-25-6-17-15L-12-8-8-12-4-6Q4-14 6-25z" fill="url(#gFox)"/><circle cx="0" cy="3" r="11" fill="#6a45d8"/><path d="M-12-4Q-2-8 4 0Q-4 0-4 6Q4 12 12 4Q10 18-2 16-14 12-12-4z" fill="#ff8f35"/></svg>
      <svg class="slot" viewBox="-36 -41 72.760 90"><use href="#tile" fill="#fff"/><path d="M-12-24H12L20-16 18-10 20-2 12 18 0 25-12 18-20-2-18-10-20-16z" fill="url(#gBrave)"/><path d="M-14-12Q-6-16 0-12 6-16 14-12L10-2 6 4 8 10 0 6-8 10-6 4-10-2z M0 10L6 13 0 18-6 13z" fill="#fff"/><path d="M-8-5L-3-3V4M8-5L3-3V4" fill="none" stroke="#e25334" stroke-width="2"/></svg>
      <svg class="slot" viewBox="-36 -41 72.760 90"><use href="#tile" fill="url(#gCanva)"/><text y="4.500" class="canva" textLength="46" lengthAdjust="spacingAndGlyphs">Canva</text></svg>
      <svg class="slot" viewBox="-36 -41 72.760 90"><use href="#tile" fill="url(#gKindle)"/><g clip-path="url(#tileClip)"><path d="M-28 20Q-14 14 0 15T28 22V28H-28z"/></g><circle cx="-7" cy="-17" r="7"/><path d="M-13-12Q-20 4-14 14L2 18 10 20 14 17 10 15 8 2-2 6-4 0 6-2 14-12 12-13 4-5-4-6-4-12z"/><use href="#run"/></svg>
      <i class="bar"></i>
      <svg class="slot" viewBox="-36 -41 72.760 90"><use href="#tile" fill="#e68a2e"/><path clip-path="url(#tileClip)" d="M8-21L28 0V28H-6L-18 17-8 4z" fill="#cf7430"/><path d="M-3-8L-11 8M3-8L11 8" stroke="#fff" stroke-width="3"/><g fill="#fff"><rect x="-8" y="-21" width="16" height="14" rx="2"/><rect x="-20" y="4" width="16" height="13.500" rx="2"/><rect x="4" y="4" width="16" height="13.500" rx="2"/></g><use href="#run"/></svg>
      <svg class="slot" viewBox="-36 -41 72.760 90"><use href="#tile" fill="#efeeec"/><path clip-path="url(#tileClip)" d="M-28-28H28V-14H-28z" fill="#f6cd45"/><path d="M-27-11H27" stroke="#b5b3ae" stroke-width="1.300" stroke-dasharray="1.500 1.500"/><path d="M-27 0H27M-27 14H27" stroke="#cfcdca" stroke-width="1.200"/><use href="#run"/></svg>
      <svg class="slot" viewBox="-36 -41 72.760 90"><use href="#tile" fill="#f6f6f6"/><use href="#chrome"/><use href="#run"/></svg>
      <svg class="slot" viewBox="-36 -41 72.760 90"><use href="#tile" fill="url(#gMail)"/><rect x="-19" y="-12" width="38" height="25" rx="2" fill="#ededee"/><path d="M-19-11L0 6 19-11M-19 12L-6 0M19 12L6 0" fill="none" stroke="#8b8f93" stroke-width="1.500"/><use href="#run"/></svg>
      <svg class="slot" viewBox="-36 -41 72.760 90"><use href="#tile" fill="#fff"/><circle cx="1" cy="-13" r="5.500" fill="#7b83eb"/><circle cx="13" cy="-11" r="4" fill="#5059c9"/><path d="M6-5H20V6q0 8-8 8z" fill="#5059c9"/><path d="M-8-5H10V9q-1 9-9 9-8-1-9-9z" fill="#7b83eb"/><rect x="-20" y="-11" width="20" height="20.500" rx="2" fill="#444cb4"/><text x="-10" y="5" class="teams">T</text><use href="#run"/></svg>
      <svg class="slot" viewBox="-36 -41 72.760 90"><use href="#tile" fill="#ebecef"/><rect x="-23" y="-23" width="45" height="45" rx="8" fill="#93b7ee"/><path d="M-23 1H22V14q0 8-8 8h-29q-8 0-8-8z" fill="#2d4a80"/><path d="M-23 8l12-2 10 6 10-4V22h-24q-8 0-8-8z" fill="#4c4a4c"/><rect x="1" y="0" width="24" height="11" rx="4" fill="#151515"/><path d="M4 11H22L28 28q0 2-3 2H0q-3 0-3-2z" fill="#d3dadd" opacity=".9"/><path d="M4 20l5-4 5 5 6-4 3 8H3z" fill="#555c60"/><use href="#run"/></svg>
      <i class="bar"></i>
      <svg class="slot" viewBox="-36 -41 72.760 90"><rect x="-32" y="-18" width="64" height="38" fill="#f3f4f6"/><path d="M-32-18H32v4H-32z" fill="#d6e3f3"/><path d="M-22-10h16M-22-4h14M-22 2h15M-22 8h12M-22 14h15" stroke="#c9ccd0" stroke-width="1.500"/><path d="M14-8h10M14-2h12M14 4h9" stroke="#7aa7d8" stroke-width="1.500"/><rect x="10" y="10" width="21" height="21" rx="5" fill="#fff"/><use href="#chrome" transform="translate(20.500 20.500) scale(.37)"/></svg>
      <svg class="slot" viewBox="-36 -41 72.760 90"><rect x="-31" y="-3.500" width="62" height="7" fill="#eceef1"/><path d="M-28 0H4" stroke="#888" stroke-width="1.200" stroke-dasharray="2 1"/><rect x="8" y="-2.500" width="16" height="5" fill="#2f62c4"/><rect x="10" y="10" width="21" height="21" rx="5" fill="#fff"/><use href="#chrome" transform="translate(20.500 20.500) scale(.37)"/></svg>
      <svg class="slot" viewBox="-36 -41 72.760 90"><path d="M-24-22H24L18 27Q0 34-18 27z" fill="url(#gBin)"/><path d="M-22-24l8-6 8 5 7-7 9 7 8-5 5 8-6 7-8-4-8 5-8-5-8 4z" fill="#e9ecee"/><path d="M-14-27l5 5M-2-29l3 6M8-26l6 4M-8-20l4-3" stroke="#5a6166" stroke-width="2.500"/><path d="M-24-22Q0-10 24-22" fill="none" stroke="#f5f5f5" stroke-width="2"/><path d="M-12-8L-8 22M2-6l4 26M14-8l-4 20" stroke="#d3d4d6" stroke-width="2"/></svg>
    </div>
  </div>
</div>
</body>
</html>
```
FILE: styles.css
```css
* { box-sizing: border-box; }
body {
  margin: 0;
  width: 3024px;
  height: 1964px;
  overflow: hidden;
  font-family: Inter, "Liberation Sans", sans-serif;
  color: #000;
}
svg { display: block; flex: none; }
.defs { position: absolute; }
.desktop {
  position: relative;
  display: flex;
  flex-direction: column;
  height: 1964px;
  background: #5f9b94;
}

/* System menu bar */
.menubar {
  display: flex;
  align-items: center;
  flex: none;
  height: 74px;
  background: linear-gradient(90deg, #5f9c95 0%, #5f9b94 60%, #528580 100%);
  color: #fff;
  font-size: 26px;
  line-height: 32px;
  white-space: nowrap;
}
.menubar > span { position: relative; top: -1px; }
.apple { margin: -4px 0 0 40px; filter: drop-shadow(0 3px 4px rgba(0, 0, 0, .3)); }
.app-name { width: 136px; margin-left: 41px; font-weight: 700; text-shadow: 0 3px 6px rgba(0, 0, 0, .3); }
.app-menu { width: 60px; text-shadow: 0 3px 6px rgba(0, 0, 0, .3); }
.status { display: flex; margin-left: auto; filter: drop-shadow(0 3px 4px rgba(0, 0, 0, .25)); }
.lang { font: 700 24px Inter, sans-serif; fill: #edf3f2; }
.date { width: 137px; margin-left: 14px; color: #edf3f2; font-weight: 500; letter-spacing: -.1px; }
.clock { width: 133px; color: #edf3f2; font-weight: 500; letter-spacing: -1px; }

/* Window, with the edge of the window behind it showing on top */
.window {
  display: flex;
  flex-direction: column;
  flex: none;
  height: 1786px;
  border-top: 6px solid #bcbfc4;
  border-radius: 22px 22px 24px 24px;
  background: #f1f2f5;
  box-shadow: 0 -1px 0 #3e4b4c;
  overflow: hidden;
  position: relative;
  z-index: 1;
}
.titlebar {
  display: flex;
  align-items: center;
  flex: none;
  height: 59px;
  background: #f3f3f3;
  border-top: 1px solid #8b8e92;
  border-bottom: 2px solid #cfcfd1;
}
.lights { display: flex; gap: 16px; margin-left: 16px; }
.lights i { width: 24px; height: 24px; border-radius: 50%; border: 1px solid rgba(0, 0, 0, .12); }
.red { background: #ed6a5e; }
.yellow { background: #f5bf4f; }
.green { background: #61c554; }
.title {
  flex: 1;
  margin-right: 124px;
  padding-bottom: 1px;
  text-align: center;
  font-size: 26px;
  font-weight: 700;
  color: #3c3c3c;
  letter-spacing: .1px;
}

.header { display: flex; flex: none; height: 129px; border-bottom: 2px solid #dadce0; }
.logo { margin: 27px 0 0 32px; }
.doc { margin-left: 40px; }
.doc-name { margin-top: 17px; line-height: 44px; font-size: 36px; letter-spacing: -1.1px; }
.menus { display: flex; margin-top: 17px; line-height: 36px; font-size: 28px; letter-spacing: -.4px; }
.m-file { width: 75px; }
.m-edit { width: 80px; }
.m-view { width: 92px; }
.m-arr { width: 133px; }
.m-ext { width: 111px; }
.sun { margin: 9px 20px 0 auto; }

.toolbar { display: flex; flex: none; height: 76px; padding-top: 2px; border-top: 2px solid #fff; border-bottom: 2px solid #d2d2d2; }
.toolbar svg { margin-top: -1px; }
.group { background: linear-gradient(#e1e3e6, #e1e3e6) 0 16px / 2px 40px no-repeat; }
.zoom { font: 28px Inter, sans-serif; fill: #000; }
.tools-right { margin-left: auto; }

.body { display: flex; flex: 1; min-height: 0; }

/* Shape library */
.sidebar { display: flex; flex-direction: column; flex: none; width: 426px; border-right: 2px solid #d9dbe0; }
.scroll { display: flex; height: 1410px; overflow: hidden; }
.sections { width: 404px; flex: none; }
.side-thumb { width: 14px; height: 1319px; margin: 3px 0 0 3px; border-radius: 7px; background: #d9dadc; flex: none; }
.search-row { height: 118px; padding: 28px 0 0 16px; }
.search {
  display: flex;
  align-items: center;
  justify-content: space-between;
  width: 372px;
  height: 56px;
  padding: 0 9px 2px 12px;
  border: 2px solid #d3d3d3;
  border-radius: 8px;
  background: #fff;
  color: #757575;
  font-size: 24px;
  letter-spacing: -.4px;
}
.section {
  display: flex;
  align-items: center;
  height: 70px;
  border-top: 2px solid #e3e4e7;
  font-size: 27px;
  font-weight: 600;
  letter-spacing: -.9px;
}
.section.tall { height: 71px; }
.section span { margin-left: 16px; white-space: nowrap; }
.section i { width: 8px; height: 16px; margin-left: 16px; background: #999; clip-path: polygon(0 0, 100% 50%, 0 100%); }
.section i.open { width: 17px; height: 9px; margin-left: 12px; clip-path: polygon(0 0, 100% 0, 50% 100%); }
.section i.open + span { margin-left: 11px; }
.pad-tools { margin-left: auto; margin-right: 25px; overflow: visible; }
.help { font: 600 25px Inter, sans-serif; fill: #a0a0a0; stroke: none; }
.drop-row { height: 112px; padding: 24px 0 0 32px; border-top: 2px solid #e3e4e7; }
.drop {
  width: 348px;
  height: 62px;
  border: 4px dotted #acacac;
  border-radius: 22px;
  text-align: center;
  line-height: 54px;
  font-size: 27px;
  letter-spacing: -.6px;
  color: #a0a0a0;
}
.palette {
  display: grid;
  grid-template-columns: repeat(5, 72px);
  grid-auto-rows: 68px;
  height: 638px;
  padding: 13px 0 0 21px;
  border-top: 2px solid #e3e4e7;
}
.palette svg { width: 72px; height: 68px; fill: none; stroke: #000; stroke-width: 2.6px; overflow: visible; }
.palette text { fill: #000; stroke: none; font-family: "Liberation Sans", Arial, sans-serif; }
.palette .solid { fill: #000; stroke: none; }
.palette .round { stroke-linecap: round; }
.more { flex: 1; padding: 22px 0 0 95px; border-top: 2px solid #d9dbe0; background: linear-gradient(#f1f2f5 20%, #dbdcdf); }
.more-btn {
  display: flex;
  align-items: center;
  justify-content: center;
  gap: 12px;
  width: 234px;
  height: 60px;
  padding-bottom: 2px;
  border: 2px solid #4076e6;
  border-radius: 6px;
  background: linear-gradient(#5f8df6, #517ad8);
  color: #fff;
  font-size: 28px;
  letter-spacing: -.6px;
  white-space: nowrap;
}

/* Drawing area */
.editor { display: flex; flex-direction: column; flex: 1; min-width: 0; }
.stage {
  position: relative;
  height: 1442px;
  border-right: 2px solid #e3e3e6;
  background: linear-gradient(#f1f1f1, #dcdcdc) 0 0 / 100% 4px no-repeat #fafafa;
}
.grid {
  position: absolute;
  left: -1px;
  top: 5px;
  width: 2580px;
  height: 1419px;
  background:
    linear-gradient(90deg, #d0d0d0 1px, transparent 1px) 79px 0 / 80px 80px,
    linear-gradient(#d0d0d0 1px, transparent 1px) 0 79px / 80px 80px,
    linear-gradient(90deg, #f5f5f5 2px, transparent 2px) 18px 0 / 20px 20px,
    linear-gradient(#f5f5f5 2px, transparent 2px) 0 18px / 20px 20px,
    #fff;
}
.note-title {
  position: absolute;
  left: 797px;
  top: 187px;
  width: 982px;
  margin: 0;
  text-align: center;
  font: 700 56px/76px "Liberation Sans", Arial, sans-serif;
}
.note {
  position: absolute;
  left: 798px;
  display: flex;
  align-items: center;
  justify-content: center;
  width: 982px;
  height: 122px;
  padding: 0 2px 1px 0;
  border: 2px solid #6f8fbf;
  background: #dde8fa;
  box-shadow: 4px 6px 0 rgba(0, 0, 0, .25);
  text-align: center;
  white-space: nowrap;
  font: 36px/43px "Liberation Sans", Arial, sans-serif;
}
.goal1 { top: 264px; }
.goal2 { top: 404px; }
.warn { top: 624px; border-color: #b15a56; background: #f2d0ce; }
.v-thumb { position: absolute; right: 2px; top: 382px; width: 13px; height: 386px; border-radius: 7px; background: #d9d9d9; }
.h-thumb { position: absolute; left: 804px; top: 1427px; width: 742px; height: 13px; border-radius: 7px; background: #d9d9d9; }

/* Page tabs */
.tabs { display: flex; height: 74px; border-top: 2px solid #d9dbe0; background: linear-gradient(#f0f1f4 20%, #d6d8da); }
.dots { display: flex; flex-direction: column; align-items: center; justify-content: center; gap: 4px; width: 46px; border-right: 2px solid #cfd0d4; }
.dots i { width: 8px; height: 8px; border-radius: 50%; background: #707173; }
.tab {
  display: flex;
  align-items: center;
  justify-content: center;
  flex: none;
  border-right: 2px solid #cbccd0;
  font-size: 24px;
  font-weight: 600;
  color: #626365;
  white-space: nowrap;
}
.tab.active { gap: 18px; background: linear-gradient(#fff 20%, #e8e8e8); }
.w251 { width: 251px; }
.w196 { width: 196px; }
.w185 { width: 185px; }
.w136 { width: 136px; }
.w158 { width: 158px; }
.w169 { width: 169px; }
.w186 { width: 186px; }
.w230 { width: 230px; }
.w225 { width: 225px; }
.w159 { width: 159px; }
.w163 { width: 163px; }
.w15 { width: 15px; }

/* Dock over the wallpaper */
.shore { position: relative; flex: 1; }
.wallpaper { position: absolute; left: 0; bottom: 0; }
.dock {
  position: relative;
  display: flex;
  width: 2915px;
  height: 90px;
  margin: 4px 0 0 55px;
  padding-left: 5.4px;
  border-radius: 26px;
  background: linear-gradient(90deg, #7f6a6a 0%, #7d6064 7%, #6d6467 12%, #95625f 18%, #706365 23%, #5f6063 31%, #636669 42%, #878585 49%, #b68b87 54%, #a19f99 59%, #a2aea7 64%, #98a69f 72%, #848e8d 77%, #8b8d90 86%, #a27a80 91%, #907078 94%, #7a6872 100%);
  box-shadow: inset 0 0 0 2px rgba(255, 255, 255, .22);
}
.slot { width: 72.76px; height: 90px; overflow: visible; }
.bar { flex: none; width: 2px; height: 66px; margin: 12px 14px 0 17px; background: rgba(40, 40, 45, .5); }
.dock text { font-family: Inter, sans-serif; text-anchor: middle; fill: #fff; }
.dock .badge { font-size: 16px; }
.dock .cal-m { font-size: 11.5px; font-weight: 600; }
.dock .cal-d { font-size: 33px; font-weight: 300; fill: #222; }
.dock .tv { font-size: 21px; font-weight: 500; text-anchor: start; letter-spacing: -.5px; }
.dock .xl { font-size: 15px; font-weight: 700; }
.dock .ce { font-size: 11px; font-weight: 600; }
.dock .canva { font-family: "Liberation Serif", serif; font-style: italic; font-weight: 700; font-size: 17px; }
.dock .teams { font-size: 15px; font-weight: 700; }
```
